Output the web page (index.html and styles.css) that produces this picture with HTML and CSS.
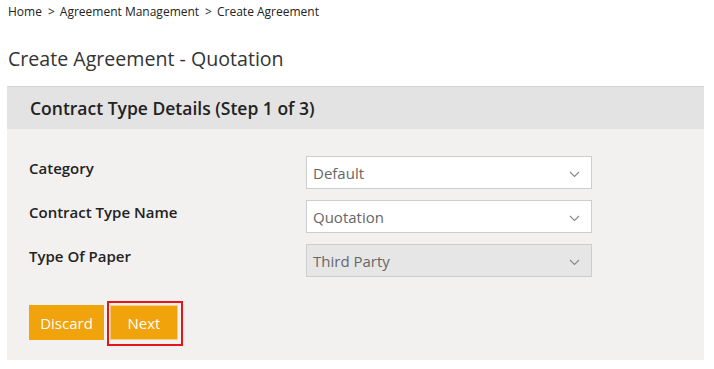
FILE: index.html
```html
<!DOCTYPE html>
<html>
    <head>
        <title>Create Agreement</title>
        <meta charset="UTF-8">
        <link rel="stylesheet" href="styles.css">
    </head>
    <body>
        <div class="crumbs">
            <a href="#">Home</a><span class="sep">&gt;</span><a href="#">Agreement Management</a><span class="sep">&gt;</span><span>Create Agreement</span>
        </div>
        <h1 class="title">Create Agreement - Quotation</h1>
        <div class="panel">
            <div class="panel-head">Contract Type Details (Step 1 of 3)</div>
            <div class="panel-body">
                <div class="row">
                    <label class="lbl">Category</label>
                    <div class="sel"><span>Default</span><svg width="11" height="7" viewBox="0 0 11 7"><path d="M1 1l4.5 4.5L10 1" fill="none" stroke="#888" stroke-width="1.1"/></svg></div>
                </div>
                <div class="row">
                    <label class="lbl">Contract Type Name</label>
                    <div class="sel"><span>Quotation</span><svg width="11" height="7" viewBox="0 0 11 7"><path d="M1 1l4.5 4.5L10 1" fill="none" stroke="#888" stroke-width="1.1"/></svg></div>
                </div>
                <div class="row">
                    <label class="lbl">Type Of Paper</label>
                    <div class="sel disabled"><span>Third Party</span><svg width="11" height="7" viewBox="0 0 11 7"><path d="M1 1l4.5 4.5L10 1" fill="none" stroke="#888" stroke-width="1.1"/></svg></div>
                </div>
                <div class="buttons">
                    <button class="btn discard">Discard</button>
                    <div class="focus"><button class="btn next">Next</button></div>
                </div>
            </div>
        </div>
    </body>
</html>
```
FILE: styles.css
```css
body{
    margin: 0;
    padding: 0 10px 0 7px;
    font-family: "Open Sans", "Noto Sans", sans-serif;
    color: #333;
    background: #fff;
}
.crumbs{
    padding: 4px 0 0 1px;
    font-size: 12px;
    line-height: 16px;
    color: #222;
}
.crumbs a{
    color: #222;
    text-decoration: none;
}
.sep{
    margin: 0 5px 0 6px;
}
.title{
    margin: 0;
    padding: 26px 0 0 1px;
    font-size: 19.6px;
    font-weight: normal;
    line-height: 26px;
    color: #333;
}
.panel{
    margin-top: 14px;
    background: #f2f1f0;
    border-top: 1px solid #d4d3d3;
}
.panel-head{
    background: #e4e3e3;
    height: 42px;
    line-height: 43px;
    padding-left: 23px;
    font-size: 17.5px;
    font-weight: 600;
    color: #222;
}
.panel-body{
    padding: 27px 0 14px 22px;
}
.row{
    display: flex;
    align-items: flex-start;
    height: 33px;
    margin-bottom: 11px;
}
.lbl{
    width: 277px;
    font-size: 15px;
    font-weight: 600;
    color: #222;
    line-height: 25px;
}
.sel{
    box-sizing: border-box;
    width: 286px;
    height: 33px;
    display: flex;
    align-items: center;
    justify-content: space-between;
    padding: 0 11px 0 6px;
    background: #fff;
    border: 1px solid #cdcdcd;
    font-size: 15px;
    color: #666;
}
.sel svg{
    margin-top: 4px;
}
.sel.disabled{
    background: #e6e6e6;
}
.buttons{
    display: flex;
    align-items: flex-start;
    margin-top: 24px;
}
.btn{
    height: 35px;
    padding: 0;
    border: 1px solid #f0a30a;
    background: #f0a30a;
    color: #fff;
    font-family: inherit;
    font-size: 15px;
}
.discard{
    width: 75px;
    margin-top: 4px;
}
.next{
    width: 68px;
    border-color: #f6cf80;
}
.focus{
    margin-left: 3px;
    padding: 2px 3px 4px 1px;
    border: 2px solid #e8141b;
}
```
